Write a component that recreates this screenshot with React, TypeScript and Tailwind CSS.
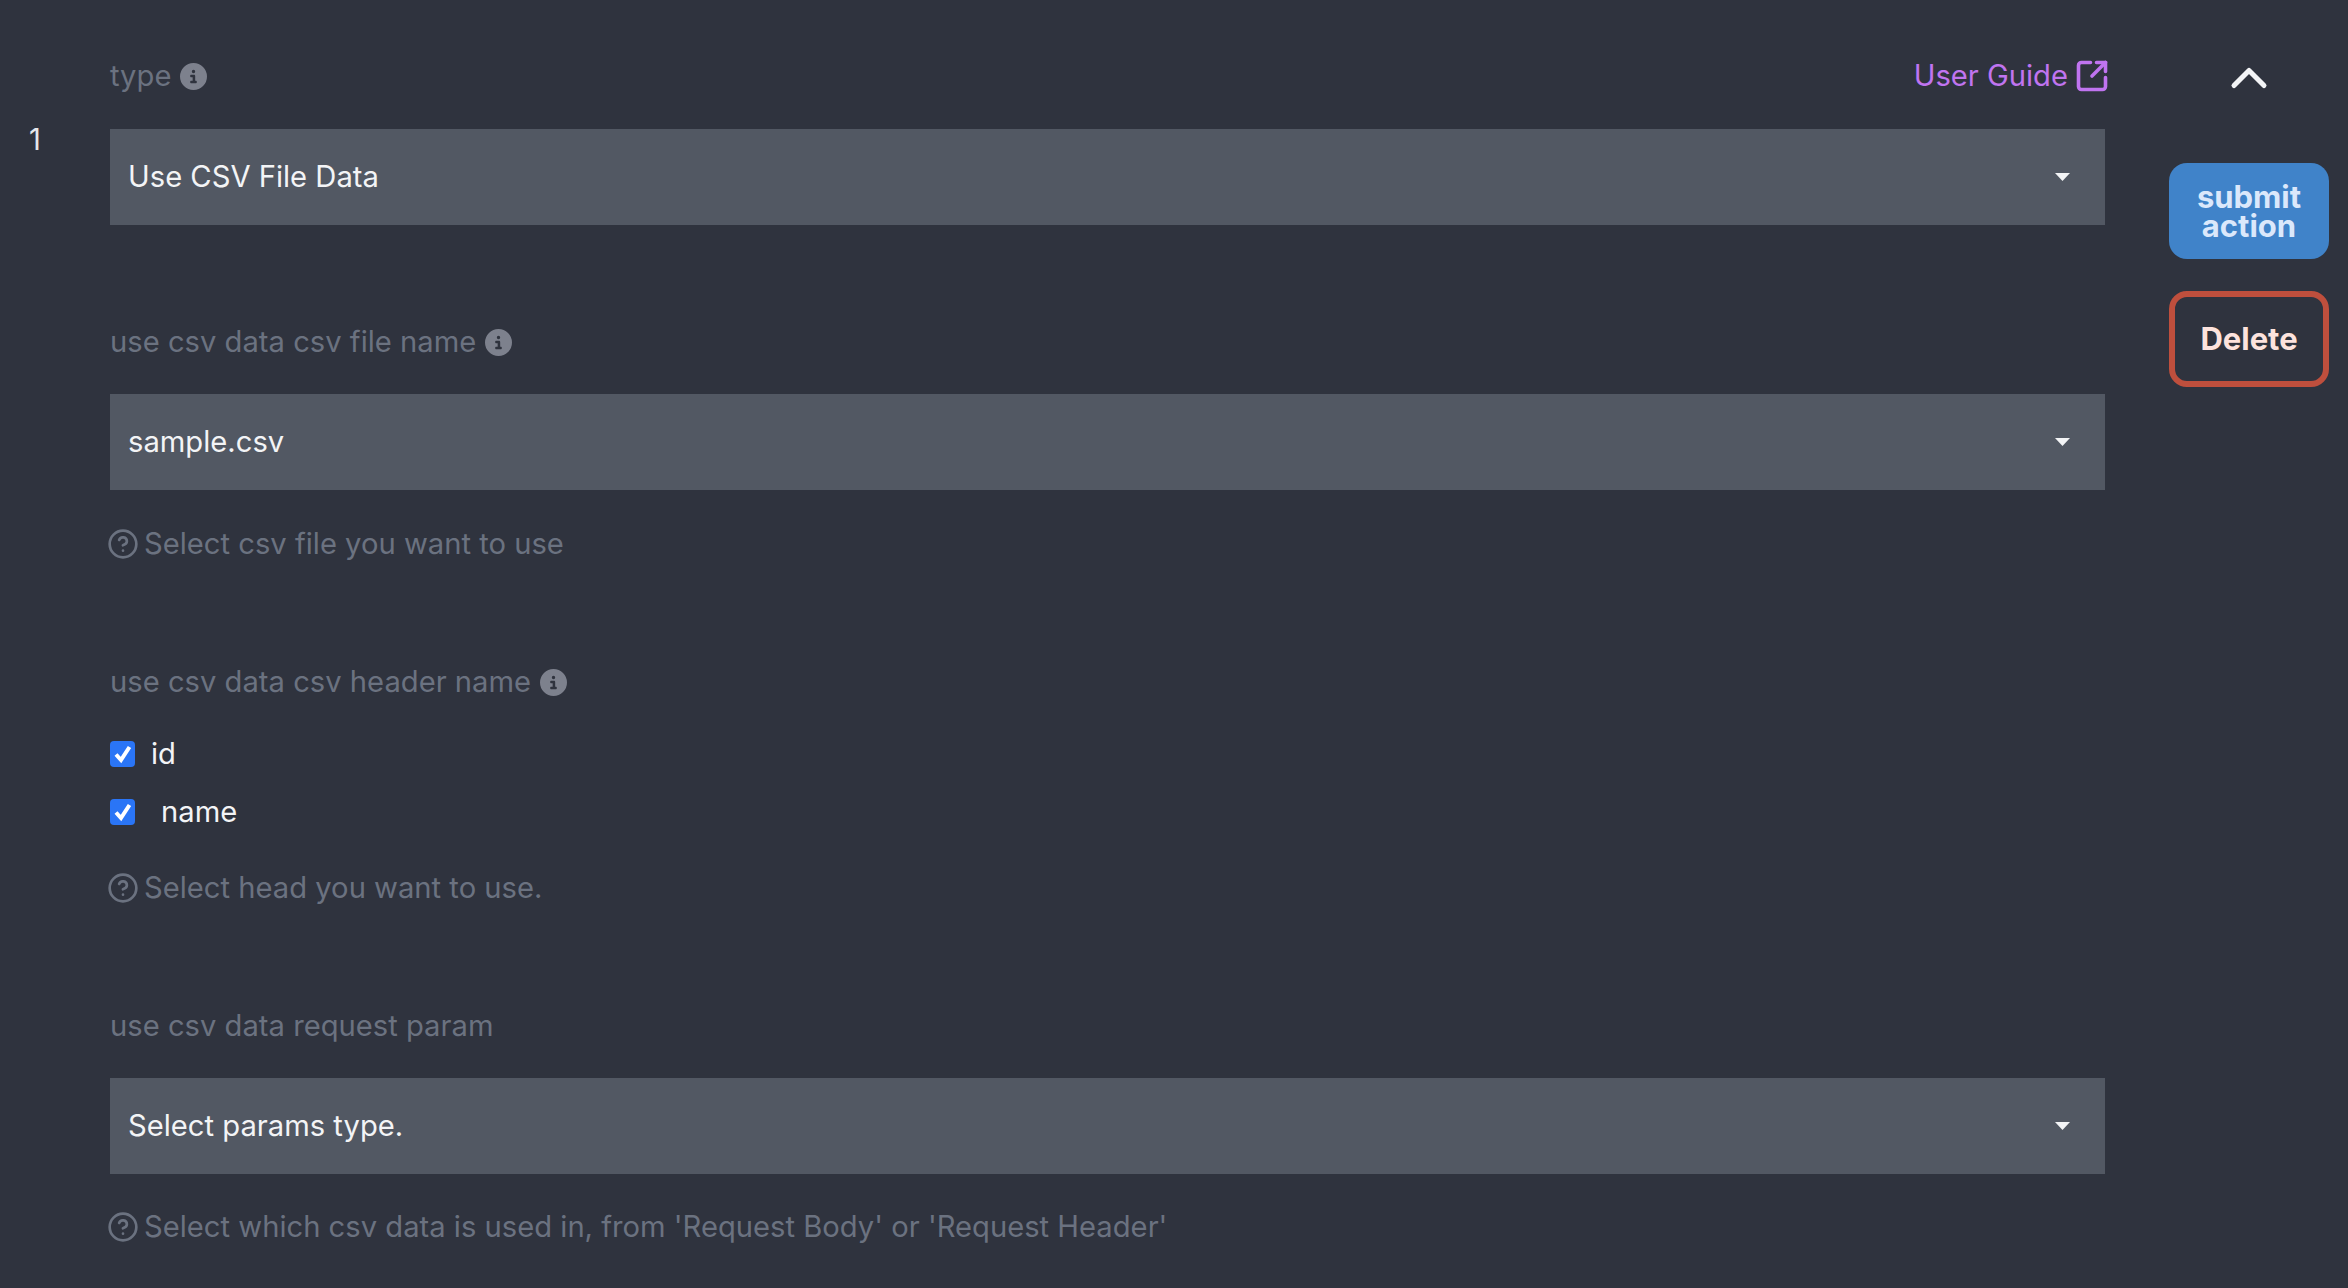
import { ChevronUp, CircleHelp, SquareArrowOutUpRight } from "lucide-react";
import { FaCircleInfo } from "react-icons/fa6";

function InfoIcon() {
  return <FaCircleInfo className="ml-[9px] h-[27px] w-[27px] shrink-0 text-[#7d818d]" />;
}

function Label({ text, info = false, className = "" }: { text: string; info?: boolean; className?: string }) {
  return (
    <div className={`flex h-[44px] items-center text-[29.2px] leading-[44px] text-[#6b7280] ${className}`}>
      <span>{text}</span>
      {info && <InfoIcon />}
    </div>
  );
}

function SelectBox({ value, className = "" }: { value: string; className?: string }) {
  return (
    <div className={`flex h-[96px] items-center justify-between bg-[#525863] pl-[18px] pr-[35px] text-[29.2px] text-[#f3f4f6] ${className}`}>
      <span>{value}</span>
      <svg width="15" height="8" viewBox="0 0 15 8">
        <path d="M0 0h15L7.5 8z" fill="#f3f4f6" />
      </svg>
    </div>
  );
}

function Hint({ text, className = "" }: { text: string; className?: string }) {
  return (
    <div className={`flex h-[44px] items-center text-[29.2px] leading-[44px] text-[#6b7280] ${className}`}>
      <CircleHelp className="-ml-[3px] mr-[5px] h-[32px] w-[32px] shrink-0" strokeWidth={2} />
      <span>{text}</span>
    </div>
  );
}

function Check({ label, labelClass }: { label: string; labelClass: string }) {
  return (
    <div className="flex h-[26px] items-center text-[29.2px] text-[#f3f4f6]">
      <span className="flex h-[26px] w-[25px] items-center justify-center rounded-[4px] bg-[#2a75f6]">
        <svg width="22" height="22" viewBox="0 0 22 22" fill="none">
          <path d="M4 11.5 9 17 17.5 4" stroke="#fff" strokeWidth="4" />
        </svg>
      </span>
      <span className={labelClass}>{label}</span>
    </div>
  );
}

export default function App() {
  return (
    <div className="flex h-[1288px] overflow-hidden bg-[#2f333e] font-['Inter',sans-serif]">
      <div className="w-[110px] shrink-0 pl-[29px] pt-[122px] text-[29.2px] leading-[36px] text-[#e5e7eb]">1</div>

      <div className="w-[1995px] shrink-0 pt-[54px]">
        <div className="flex items-center justify-between">
          <Label text="type" info />
          <a className="flex items-center text-[29.2px] text-[#c074f0]">
            User Guide
            <SquareArrowOutUpRight className="-mr-[5px] ml-[6px] h-[36px] w-[36px]" strokeWidth={2.4} />
          </a>
        </div>
        <SelectBox value="Use CSV File Data" className="mt-[31px]" />

        <Label text="use csv data csv file name" info className="mt-[95px]" />
        <SelectBox value="sample.csv" className="mt-[30px]" />
        <Hint text="Select csv file you want to use" className="mt-[32px]" />

        <Label text="use csv data csv header name" info className="mt-[94px]" />
        <div className="mt-[37px] flex flex-col gap-[32px]">
          <Check label="id" labelClass="ml-[16px]" />
          <Check label="name" labelClass="ml-[26px]" />
        </div>
        <Hint text="Select head you want to use." className="mt-[41px]" />

        <Label text="use csv data request param" className="mt-[94px]" />
        <SelectBox value="Select params type." className="mt-[30px]" />
        <Hint text="Select which csv data is used in, from 'Request Body' or 'Request Header'" className="mt-[31px]" />
      </div>

      <div className="ml-[64px] flex w-[160px] shrink-0 flex-col items-center pt-[48px]">
        <ChevronUp className="h-[60px] w-[60px] text-[#f3f4f6]" strokeWidth={2} />
        <button className="mt-[55px] flex h-[96px] w-[160px] items-center justify-center rounded-[18px] bg-[#4083c9] text-[31px] font-bold leading-[29px] text-[#dbe8fb]">
          submit
          <br />
          action
        </button>
        <button className="mt-[32px] h-[96px] w-[160px] rounded-[18px] border-[6px] border-[#bf4f3d] text-[31px] font-bold text-[#fde3dd]">
          Delete
        </button>
      </div>
    </div>
  );
}
